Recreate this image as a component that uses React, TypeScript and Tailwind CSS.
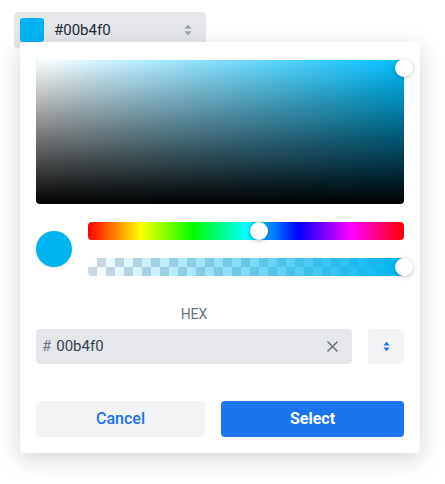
import React from "react";

const HEX = "00b4f0";
const HUE = 195;

// small up/down carets used by the trigger and the format toggle
const Carets = ({ className, w, h }: { className: string; w: number; h: number }) => (
  <svg width={w} height={h} viewBox="0 0 8 12" className={className} fill="currentColor">
    <path d="M4 0.5 L7.5 4.8 H0.5 Z" />
    <path d="M4 11.5 L7.5 7.2 H0.5 Z" />
  </svg>
);

const Thumb = ({ className }: { className: string }) => (
  <div
    className={`absolute h-[18px] w-[18px] -translate-x-1/2 -translate-y-1/2 rounded-full bg-white shadow-[0_1px_4px_rgba(0,0,0,0.25)] ${className}`}
  />
);

const App: React.FC = () => {
  const hueLeft = `${(HUE / 360) * 100}%`;

  return (
    <div className="min-h-screen bg-white font-['Roboto',sans-serif]">
      <div className="relative ml-[14px] w-[192px] pt-3">
        {/* trigger */}
        <div className="flex h-9 items-center rounded-[4px] bg-[#e5e7eb] pl-[6px] pr-[14px]">
          <div className="h-6 w-6 rounded-[3px] bg-[#00b4f0]" />
          <span className="ml-[10px] flex-1 text-[15px] text-[#1f2937]">#{HEX}</span>
          <Carets className="text-[#9ca3af]" w={8} h={12} />
        </div>

        {/* popup */}
        <div className="absolute left-[6px] top-[42px] w-[400px] rounded-[4px] bg-white px-4 pb-4 pt-[18px] shadow-[0_6px_22px_rgba(15,23,42,0.18)]">
          {/* saturation / value area */}
          <div className="relative h-[144px] rounded-[4px] bg-[#00bfff]">
            <div className="absolute inset-0 rounded-[4px] bg-[linear-gradient(to_right,#fff,rgba(255,255,255,0))]" />
            <div className="absolute inset-0 rounded-[4px] bg-[linear-gradient(to_bottom,rgba(0,0,0,0),#000)]" />
            <Thumb className="left-full top-[8px]" />
          </div>

          <div className="mt-[18px] flex items-center">
            <div className="h-9 w-9 rounded-full bg-[#00b4f0] shadow-[0_1px_3px_rgba(0,0,0,0.12)]" />
            <div className="ml-4 flex flex-1 flex-col gap-[18px]">
              <div className="relative h-[18px] rounded-[4px] bg-[linear-gradient(to_right,#f00,#ff0,#0f0,#0ff,#00f,#f0f,#f00)]">
                <div
                  className="absolute top-1/2 h-[18px] w-[18px] -translate-x-1/2 -translate-y-1/2 rounded-full bg-white shadow-[0_1px_4px_rgba(0,0,0,0.25)]"
                  style={{ left: hueLeft }}
                />
              </div>
              <div className="relative h-[18px] rounded-[4px] bg-[repeating-conic-gradient(#cfd8e0_0%_25%,#ffffff_0%_50%)] bg-[length:18px_18px]">
                <div className="absolute inset-0 rounded-[4px] bg-[linear-gradient(to_right,rgba(0,180,240,0),#00b4f0)]" />
                <Thumb className="left-full top-1/2" />
              </div>
            </div>
          </div>

          {/* hex input */}
          <div className="mt-[28px] flex gap-4">
            <div className="flex w-[316px] flex-col">
              <div className="text-center text-[14px] leading-5 text-[#6b7280]">HEX</div>
              <div className="mt-[5px] flex h-[35px] items-center rounded-[4px] bg-[#e5e7eb] pl-[6px] pr-[14px]">
                <span className="text-[15px] text-[#6b7280]">#</span>
                <span className="ml-[5px] flex-1 text-[15px] text-[#374151]">{HEX}</span>
                <svg width="11" height="11" viewBox="0 0 11 11" className="text-[#6b7280]" stroke="currentColor" strokeWidth="1.6" strokeLinecap="round">
                  <path d="M1 1 L10 10 M10 1 L1 10" />
                </svg>
              </div>
            </div>
            <div className="mt-[25px] flex h-[35px] w-9 items-center justify-center rounded-[4px] bg-[#f3f4f6]">
              <Carets className="text-[#1b72ee]" w={7} h={11} />
            </div>
          </div>

          {/* actions */}
          <div className="mt-[37px] flex gap-4">
            <button className="h-9 w-[169px] rounded-[4px] bg-[#f3f4f6] text-[16px] font-medium text-[#1b72ee]">
              Cancel
            </button>
            <button className="h-9 flex-1 rounded-[4px] bg-[#1c74f0] text-[16px] font-bold text-white">
              Select
            </button>
          </div>
        </div>
      </div>
    </div>
  );
};

export default App;
